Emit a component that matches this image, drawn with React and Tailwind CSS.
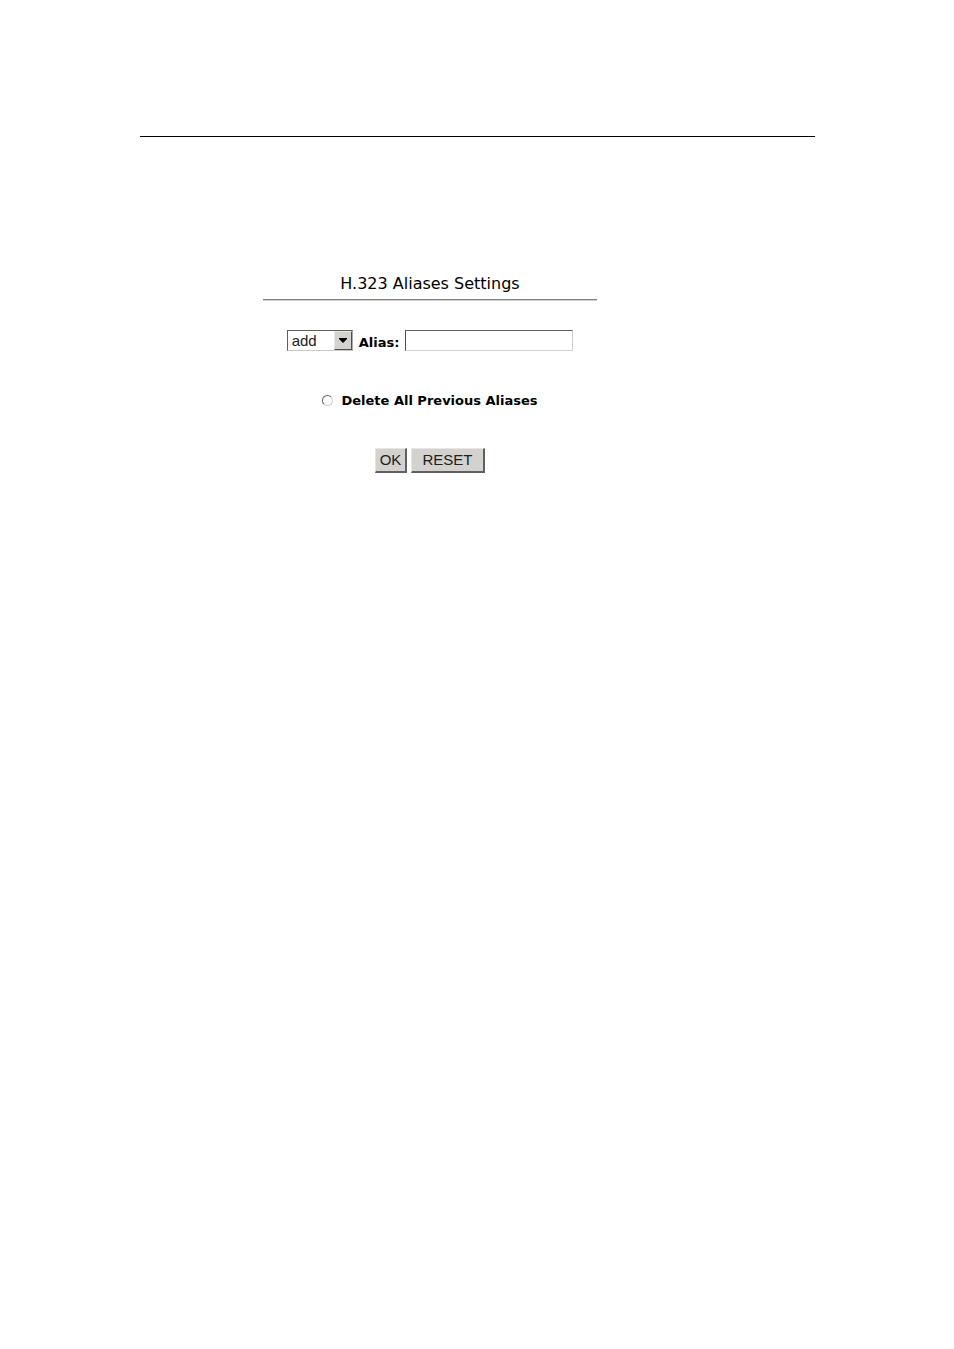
import { useState } from 'react';

export default function App() {
  const [action, setAction] = useState('add');
  const [alias, setAlias] = useState('');
  const [deleteAll, setDeleteAll] = useState(false);

  const handleReset = () => {
    setAction('add');
    setAlias('');
    setDeleteAll(false);
  };

  return (
    <div className="min-h-screen bg-white text-black font-['DejaVu_Sans',Verdana,sans-serif] pl-[140px] pr-[139px] pt-[136px]">
      <hr className="border-0 h-px bg-black" />

      <form
        className="w-full max-w-[334px] ml-[123px] mt-[135px] flex flex-col items-center"
        onSubmit={e => e.preventDefault()}
        onReset={handleReset}
      >
        <h1 className="text-base leading-6 whitespace-nowrap">H.323 Aliases Settings</h1>
        <hr className="w-full h-[2px] mt-[3px] border-0 border-t border-t-[#808080] bg-[#d0d0d0]" />

        {/* Alias row */}
        <div className="flex items-start mt-[29px]">
          <div className="relative">
            <select
              aria-label="Action"
              value={action}
              onChange={e => setAction(e.target.value)}
              className="block appearance-none w-[66px] h-[21px] pl-1 pr-5 bg-white border border-t-[#606060] border-l-[#606060] border-r-[#a8a8a8] border-b-[#c8c8c8] text-[15px] leading-[19px] text-[#202020] font-['Liberation_Sans',Arial,sans-serif] outline-none"
            >
              <option value="add">add</option>
              <option value="delete">delete</option>
            </select>
            <span className="pointer-events-none absolute right-px top-px bottom-px w-[18px] flex items-center justify-center bg-[#d4d2ce] border border-t-[#e8e6e2] border-l-[#e8e6e2] border-r-[#505050] border-b-[#505050]">
              <svg width="8" height="5" viewBox="0 0 8 5">
                <path d="M0 0h8v1L4 5L0 1z" fill="#000" />
              </svg>
            </span>
          </div>
          <label htmlFor="alias" className="ml-[6px] mt-1 text-[13px] leading-[18px] font-bold">Alias:</label>
          <input
            id="alias"
            type="text"
            value={alias}
            onChange={e => setAlias(e.target.value)}
            className="ml-[6px] w-[168px] h-[21px] px-1 bg-white border border-t-[#606060] border-l-[#505050] border-r-[#d0cdc8] border-b-[#d0d0d0] text-[15px] font-['Liberation_Sans',Arial,sans-serif] outline-none"
          />
        </div>

        {/* Delete all */}
        <div className="flex items-start mt-[39px]">
          <input
            id="delete-all"
            type="radio"
            checked={deleteAll}
            onChange={() => setDeleteAll(true)}
            className="appearance-none w-[11px] h-[11px] mt-1 rounded-full border border-t-[#606060] border-l-[#606060] border-r-[#d0d0d0] border-b-[#d0d0d0] checked:bg-black"
          />
          <label htmlFor="delete-all" className="ml-2 text-[13px] leading-[20px] font-bold whitespace-nowrap">
            Delete All Previous Aliases
          </label>
        </div>

        <div className="flex gap-1 mt-[37px] text-[15px] leading-[22px] text-[#202020] font-['Liberation_Sans',Arial,sans-serif]">
          <button type="submit" className="w-8 h-[25px] bg-[#d4d2ce] border border-t-[#e8e6e2] border-l-[#e8e6e2] border-r-2 border-b-2 border-r-[#606060] border-b-[#606060]">
            OK
          </button>
          <button type="reset" className="w-[74px] h-[25px] bg-[#d4d2ce] border border-t-[#e8e6e2] border-l-[#e8e6e2] border-r-2 border-b-2 border-r-[#606060] border-b-[#606060]">
            RESET
          </button>
        </div>
      </form>
    </div>
  );
}
